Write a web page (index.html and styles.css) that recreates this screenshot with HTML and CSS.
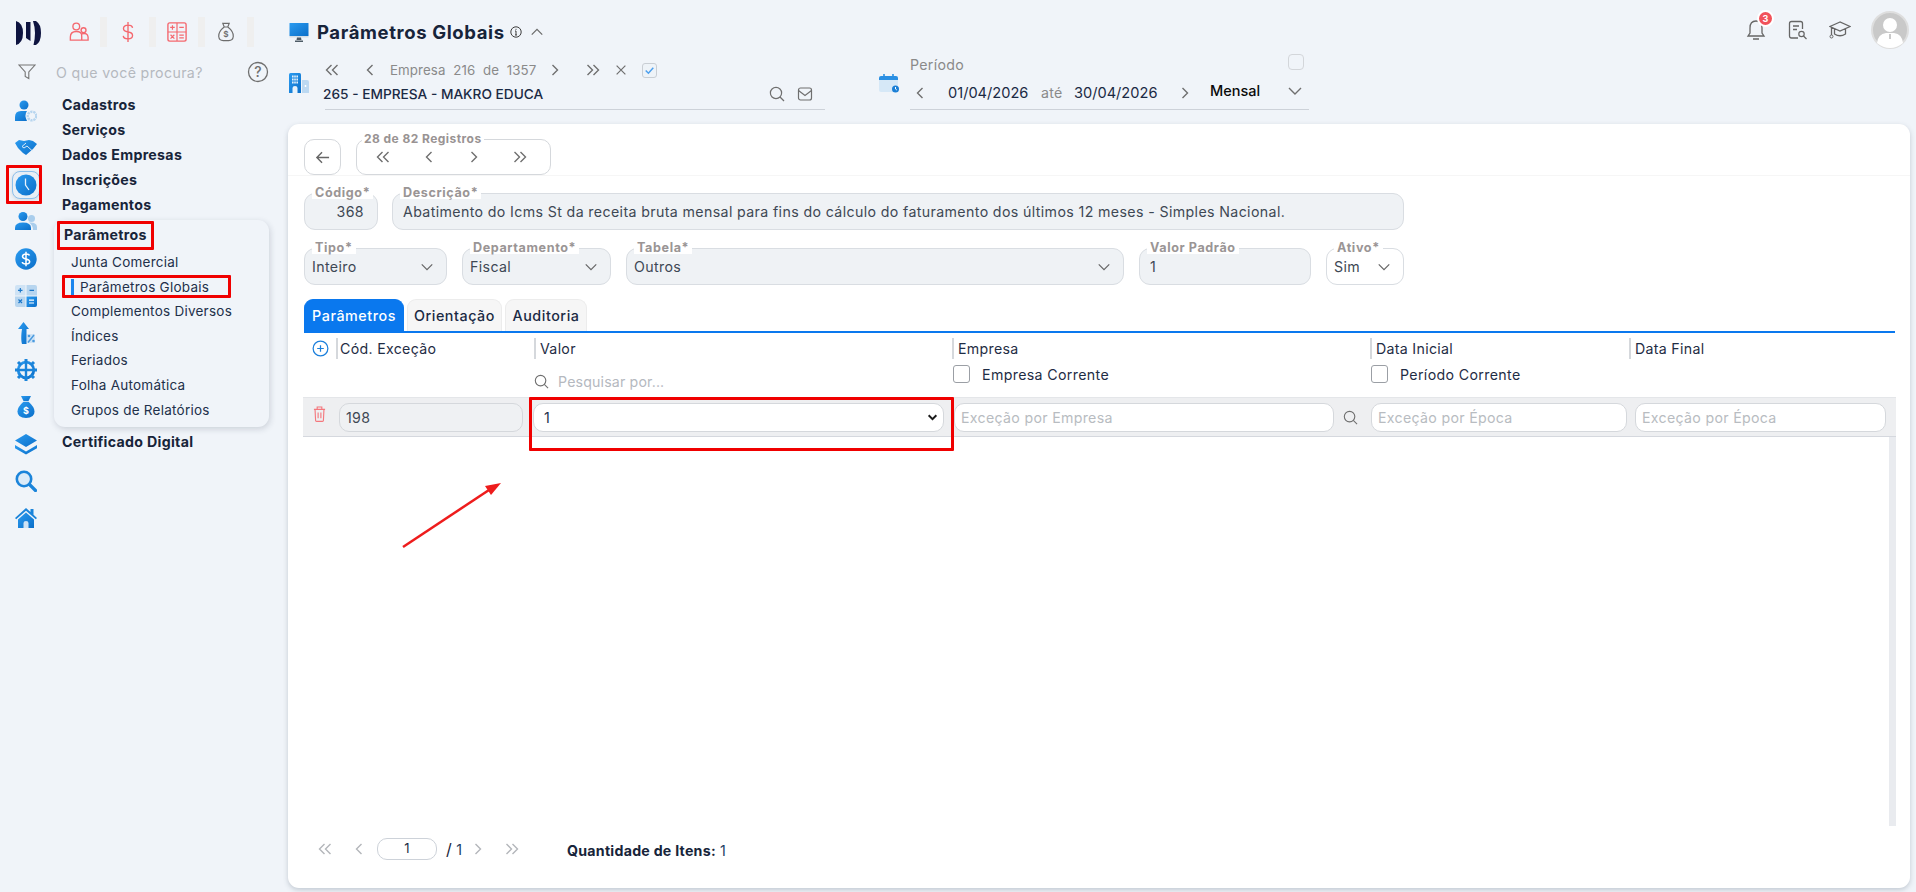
FILE: index.html
```html
<!DOCTYPE html>
<html lang="pt-BR">
<head>
<meta charset="utf-8">
<title>Parâmetros Globais</title>
<link rel="stylesheet" href="styles.css">
</head>
<body>
<svg class="defs" width="0" height="0" aria-hidden="true">
  <defs>
    <linearGradient id="bl" x1="0" y1="0" x2="1" y2="1"><stop offset="0" stop-color="#2b9bf0"/><stop offset="1" stop-color="#0b6fc9"/></linearGradient>
    <linearGradient id="lt" x1="0" y1="0" x2="1" y2="1"><stop offset="0" stop-color="#dcebf8"/><stop offset="1" stop-color="#a9cdec"/></linearGradient>
    <symbol id="dl" viewBox="0 0 16 16"><path d="M7.5 3 2.5 8l5 5M13.5 3l-5 5 5 5" fill="none" stroke="currentColor" stroke-width="1.4"/></symbol>
    <symbol id="l" viewBox="0 0 16 16"><path d="M10.5 3 5.5 8l5 5" fill="none" stroke="currentColor" stroke-width="1.4"/></symbol>
    <symbol id="r" viewBox="0 0 16 16"><path d="m5.5 3 5 5-5 5" fill="none" stroke="currentColor" stroke-width="1.4"/></symbol>
    <symbol id="dr" viewBox="0 0 16 16"><path d="m2.5 3 5 5-5 5M8.5 3l5 5-5 5" fill="none" stroke="currentColor" stroke-width="1.4"/></symbol>
    <symbol id="dn" viewBox="0 0 16 16"><path d="m2 5 6 6 6-6" fill="none" stroke="currentColor" stroke-width="1.4"/></symbol>
    <symbol id="se" viewBox="0 0 16 16"><circle cx="7" cy="7" r="5.6" fill="none" stroke="currentColor" stroke-width="1.2"/><path d="m11 11 4 4" stroke="currentColor" stroke-width="1.2"/></symbol>
  </defs>
</svg>

<div class="app">
  <aside class="side">
    <div class="side-top">
      <svg class="logo" viewBox="0 0 26 26"><path d="M1 1Q8 3 8 13T1 25ZM11 2h4.500v19L11 18ZM18 1h3q5 3 5 12t-5 12h-2.500q1.500-6 1.500-12T18 1Z" fill="#0e1440"/></svg>
      <div class="quick">
        <span class="quick-cell"><svg viewBox="0 0 22 22"><circle cx="8" cy="5" r="3.700" fill="none" stroke="#f4686f" stroke-width="1.500"/><circle cx="16" cy="9" r="2.700" fill="none" stroke="#f4686f" stroke-width="1.500"/><path d="M1.500 20v-3.500Q1.500 10.500 8 10.500t6 5.500v4ZM14 13q6.500-1.500 7 3.500V20h-7" fill="none" stroke="#f4686f" stroke-width="1.500"/></svg></span>
        <span class="quick-cell"><svg viewBox="0 0 22 22"><path d="M16 6.500Q15.500 3.500 11 3.500T6 7q0 3.500 5 4t5 3.800q0 3.700-5 3.700t-5.200-3.200M11 0v22" fill="none" stroke="#f4686f" stroke-width="1.500"/></svg></span>
        <span class="quick-cell"><svg viewBox="0 0 22 22"><rect x="1" y="1" width="20" height="20" rx="2" fill="none" stroke="#f4686f" stroke-width="1.500"/><path d="M11 1v20M1 11h20M3.500 6h5M6 3.500v5M13.500 6h5M3.900 14l4.200 4.200M8.100 14l-4.200 4.200M13.500 14.500h5M13.500 17.500h5" stroke="#f4686f" stroke-width="1.300" fill="none"/></svg></span>
        <span class="quick-cell"><svg viewBox="0 0 22 22"><path d="M7.500 1.500h7L13 5.500H9ZM9 5.500Q2.500 10.500 3 16q.5 4.500 5 4.500h6q4.500 0 5-4.500.5-5.500-6-10.500" fill="none" stroke="#6d6d6d" stroke-width="1.300"/><text x="11" y="16.500" class="money">$</text></svg></span>
      </div>
    </div>
    <div class="side-search">
      <svg class="filter" viewBox="0 0 18 18"><path d="M1 2h16l-6.200 7v6.500L7.200 13.500V9Z" fill="none" stroke="#757575" stroke-width="1.100"/></svg>
      <span class="placeholder-top">O que você procura?</span>
      <svg class="help" viewBox="0 0 22 22"><circle cx="11" cy="11" r="9.500" fill="none" stroke="#6f6f6f" stroke-width="1.300"/><text x="11" y="15.500" class="qmark">?</text></svg>
    </div>
    <div class="side-body">
      <nav class="rail">
        <svg viewBox="0 0 22 22"><circle cx="9" cy="5" r="4.500" fill="url(#bl)"/><path d="M0 21v-4q0-6 6-6h6q-3 4 0 10Z" fill="url(#bl)"/><circle cx="17" cy="16" r="4.300" fill="none" stroke="#b7d5ef" stroke-width="2.400" stroke-dasharray="2.200 .8"/></svg>
        <svg viewBox="0 0 22 22"><path d="M0 6 4 3l5 1 5-1 4 1 4 3-4 5-7 6-3-2-5-5Z" fill="url(#bl)"/><path d="M11 6 7 9.500l2 1.500 3-2 5.500 5" fill="none" stroke="#d9e9f7" stroke-width="1"/></svg>
        <span class="rail-active"><svg viewBox="0 0 22 22"><circle cx="11" cy="11" r="10.500" fill="url(#bl)"/><path d="M10.500 4.500V11l3.500 5" fill="none" stroke="#e8f3fc" stroke-width="1.300"/></svg></span>
        <svg viewBox="0 0 22 22"><circle cx="8" cy="5.500" r="4.500" fill="url(#bl)"/><path d="M0 19v-2q0-5.500 8-5.500t8 5.500v2Z" fill="url(#bl)"/><circle cx="16.500" cy="7.500" r="3.500" fill="#a9cdec"/><path d="M14 11.500q8-.5 8 4.500v3h-4q0-5-4-7.500Z" fill="#a9cdec"/></svg>
        <svg viewBox="0 0 22 22"><circle cx="11" cy="11" r="10.700" fill="url(#bl)"/><path d="M14.500 7.500Q14 6 11 6T7.500 8.200Q7.500 10.500 11 11t3.700 2.800Q14.500 16 11 16t-3.700-2M11 3.800v14.400" fill="none" stroke="#fff" stroke-width="1.500"/></svg>
        <svg viewBox="0 0 22 22"><path d="M2 0h8.500v10.500H0V2Q0 0 2 0Z" fill="#cfe3f5"/><path d="M11.500 0H20q2 0 2 2v8.500H11.500Z" fill="#b7d5ef"/><path d="M0 11.500h10.500V22H2q-2 0-2-2Z" fill="#b7d5ef"/><path d="M11.500 11.500H22V20q0 2-2 2h-8.500Z" fill="url(#bl)"/><path d="M3 5.300h4.500M5.300 3v4.500M14.500 5.300h4.500M3.500 14.500l3.500 3.500M7 14.500 3.500 18" stroke="#1976c9" stroke-width="1.200"/><path d="M14 15.200h5M14 18h5" stroke="#fff" stroke-width="1.200"/></svg>
        <svg viewBox="0 0 22 22"><path d="M8.500 0 14 7h-2.500v15H7c-1-3-1-9 0-15H3Z" fill="url(#bl)"/><path d="M12 12h8v9h-8Z" fill="#cfe3f5"/><path d="m19 13-6 7.500" stroke="#4a9adf" stroke-width="1.500"/><circle cx="14" cy="14" r="1.300" fill="#4a9adf"/><circle cx="18.500" cy="19" r="1.300" fill="#4a9adf"/></svg>
        <svg viewBox="0 0 22 22"><circle cx="11" cy="11" r="7.800" fill="none" stroke="url(#bl)" stroke-width="2.800"/><path d="M11 0v4M11 18v4M0 11h4M18 11h4M3 3l3 3M16 16l3 3M19 3l-3 3M6 16l-3 3" stroke="#1b84da" stroke-width="3"/><path d="M11 4v14M4 11h14" stroke="#1b84da" stroke-width="2.400"/></svg>
        <svg viewBox="0 0 22 22"><path d="M6 0h10l-2.500 5h-5Z" fill="url(#bl)"/><path d="M8.500 5.800h5Q19.500 11 19.500 15.500q0 6.500-8.500 6.500t-8.500-6.500Q2.500 11 8.500 5.800Z" fill="url(#bl)"/><text x="11" y="18" class="money-w">$</text></svg>
        <svg viewBox="0 0 22 22"><path d="M11 1 22 7.500 11 14 0 7.500Z" fill="url(#bl)"/><path d="m0 12 11 6.500L22 12v3.200L11 21.500 0 15.200Z" fill="url(#bl)"/></svg>
        <svg viewBox="0 0 22 22"><circle cx="9" cy="9" r="7.200" fill="#dcebf8" stroke="#1b84da" stroke-width="2.600"/><path d="m14.500 14.500 6 6" stroke="#1b84da" stroke-width="3.200" stroke-linecap="round"/></svg>
        <svg viewBox="0 0 22 22"><path d="M11 1 0 11l1.200 1.300L11 3.800l9.800 8.500L22 11l-3.500-3.200V2h-3v3Z" fill="#1b84da"/><path d="M11 5.500 3 12.500V21h16v-8.500Z" fill="url(#bl)"/><path d="M8.500 21v-5q0-2 2.500-2t2.500 2v5Z" fill="#cfe3f5"/></svg>
      </nav>
      <div class="menu">
        <a class="menu-main">Cadastros</a>
        <a class="menu-main">Serviços</a>
        <a class="menu-main">Dados Empresas</a>
        <a class="menu-main">Inscrições</a>
        <a class="menu-main">Pagamentos</a>
        <div class="submenu">
          <a class="submenu-title">Parâmetros</a>
          <a class="sub">Junta Comercial</a>
          <a class="sub sub-on">Parâmetros Globais</a>
          <a class="sub">Complementos Diversos</a>
          <a class="sub">Índices</a>
          <a class="sub">Feriados</a>
          <a class="sub">Folha Automática</a>
          <a class="sub">Grupos de Relatórios</a>
        </div>
        <a class="menu-main menu-cert">Certificado Digital</a>
      </div>
    </div>
  </aside>

  <main class="main">
    <header class="top">
      <div class="top-left">
        <div class="title-row">
          <svg class="ic20" viewBox="0 0 20 20"><path d="M1 1h18q.5 0 .5.500V14H.5V1.500Q.5 1 1 1Z" fill="url(#bl)"/><path d="M.5 14h19v1.500H.5Z" fill="#d5dee6"/><path d="M8 15.500h4l.5 2.500H7.500ZM6 18.500h8V20H6Z" fill="#4d5b66"/></svg>
          <h1>Parâmetros Globais</h1>
          <svg class="ic12" viewBox="0 0 12 12"><circle cx="6" cy="6" r="5.200" fill="none" stroke="#3d3d3d"/><path d="M6 5v4M5 5h1M5 9h2M6 2.800v1" stroke="#3d3d3d"/></svg>
          <svg class="ic14 grey" viewBox="0 0 16 16"><path d="m2 11 6-6 6 6" fill="none" stroke="currentColor" stroke-width="1.400"/></svg>
        </div>
        <div class="filters">
          <div class="company">
            <svg class="ic20 f-icon" viewBox="0 0 20 20"><path d="M1.500 0h9q1.500 0 1.500 1.500V20H0V1.500Q0 0 1.500 0Z" fill="url(#bl)"/><path d="M13 7h5q2 0 2 2v11h-7Z" fill="#bcd9f2"/><path d="M3 3.500h6M3 6.500h6M3 9.500h6" stroke="#e3f0fb" stroke-width="1.800" stroke-dasharray="1.600 .6"/><path d="M3.500 20v-5q0-2 2.500-2t2.500 2v5Z" fill="#e8f3fc"/><path d="M16.500 12v2" stroke="#fff" stroke-width="1.500"/></svg>
            <div class="company-body">
              <div class="company-nav">
                <svg class="nav-i n1"><use href="#dl"/></svg>
                <svg class="nav-i n2"><use href="#l"/></svg>
                <span class="company-count">Empresa&nbsp; 216 &nbsp;de&nbsp; 1357</span>
                <svg class="nav-i n3"><use href="#r"/></svg>
                <svg class="nav-i n4"><use href="#dr"/></svg>
                <svg class="nav-i n5" viewBox="0 0 16 16"><path d="m3 3 10 10M13 3 3 13" stroke="currentColor" stroke-width="1.400"/></svg>
                <span class="check-on"><svg viewBox="0 0 12 12"><path d="m2.500 6 2.500 2.500 4.500-5" fill="none" stroke="#4ea0ee" stroke-width="1.400"/></svg></span>
              </div>
              <div class="company-sel">
                <span class="company-name">265 - EMPRESA - MAKRO EDUCA</span>
                <svg class="nav-i sel-search"><use href="#se"/></svg>
                <svg class="nav-i sel-mail" viewBox="0 0 16 16"><rect x="1.500" y="2" width="13" height="12" rx="2" fill="none" stroke="currentColor" stroke-width="1.200"/><path d="m1.500 4.500 6.500 5 6.500-5" fill="none" stroke="currentColor" stroke-width="1.200"/></svg>
              </div>
            </div>
          </div>
          <div class="period">
            <svg class="ic20 f-icon" viewBox="0 0 20 20"><path d="M2 3h15q2 0 2 2v2H0V5q0-2 2-2Z" fill="#2a8fe3"/><path d="M0 7h19v10q0 2-2 2H2q-2 0-2-2Z" fill="#d6e8f7"/><path d="M5 1v3M14 1v3" stroke="#2a8fe3" stroke-width="1.600"/><circle cx="16.500" cy="16" r="3.500" fill="#1b7fd6"/><path d="M16.500 14v2l1.300 1" stroke="#fff" fill="none"/></svg>
            <div class="period-body">
              <div class="period-head"><span class="period-label">Período</span><span class="box-top"></span></div>
              <div class="period-sel">
                <svg class="nav-i p1"><use href="#l"/></svg>
                <span class="date d1">01/04/2026</span>
                <span class="ate">até</span>
                <span class="date d2">30/04/2026</span>
                <svg class="nav-i p2"><use href="#r"/></svg>
                <span class="mensal">Mensal</span>
                <svg class="nav-i p3"><use href="#dn"/></svg>
              </div>
            </div>
          </div>
        </div>
      </div>
      <div class="top-right">
        <span class="bell"><svg viewBox="0 0 20 24"><path d="M10 3q-6 0-6 7v5l-2 3h16l-2-3v-5q0-7-6-7ZM7 21h6" fill="none" stroke="#666" stroke-width="1.300"/></svg><b class="badge">3</b></span>
        <svg class="tr-doc" viewBox="0 0 20 20"><path d="M10 18H3.500Q1.500 18 1.500 16V3.500Q1.500 1.500 3.500 1.500h9q2 0 2 2V9M5 6h6M5 9.500h4" fill="none" stroke="#666" stroke-width="1.300"/><circle cx="13.500" cy="14" r="2.700" fill="none" stroke="#666" stroke-width="1.200"/><path d="m15.500 16 3 3" stroke="#666" stroke-width="1.200"/></svg>
        <svg class="tr-cap" viewBox="0 0 22 20"><path d="M11 2 1 6.500 11 11l10-4.500ZM5.500 9v5q5.500 3.500 11 0V9M2.500 7.500V15" fill="none" stroke="#666" stroke-width="1.300"/><circle cx="2.500" cy="16.500" r="1.500" fill="none" stroke="#666"/></svg>
        <span class="avatar"><svg viewBox="0 0 38 38"><circle cx="19" cy="19" r="18" fill="#c9c9c9" stroke="#dedede" stroke-width="2"/><circle cx="19" cy="14" r="7" fill="#fff"/><path d="M6 32q1-9 9-10h8q8 1 9 10-6 5-13 5T6 32Z" fill="#fff"/><path d="M18 23h2v5h-2Z" fill="#c9c9c9"/></svg></span>
      </div>
    </header>

    <section class="card">
      <div class="card-nav">
        <button class="back"><svg viewBox="0 0 16 16"><path d="M15 8H2M7.500 2.500 2 8l5.500 5.500" fill="none" stroke="#666" stroke-width="1.500"/></svg></button>
        <div class="rec">
          <span class="rec-label">28 de 82 Registros</span>
          <svg class="nav-i"><use href="#dl"/></svg>
          <svg class="nav-i"><use href="#l"/></svg>
          <svg class="nav-i"><use href="#r"/></svg>
          <svg class="nav-i"><use href="#dr"/></svg>
        </div>
      </div>

      <div class="form-row row-a">
        <div class="field f-code"><label>Código*</label><span class="val right">368</span></div>
        <div class="field f-desc"><label>Descrição*</label><span class="val">Abatimento do Icms St da receita bruta mensal para fins do cálculo do faturamento dos últimos 12 meses - Simples Nacional.</span></div>
      </div>
      <div class="form-row row-b">
        <div class="field f-tipo"><label>Tipo*</label><span class="val">Inteiro</span><svg class="chev"><use href="#dn"/></svg></div>
        <div class="field f-dep"><label>Departamento*</label><span class="val">Fiscal</span><svg class="chev"><use href="#dn"/></svg></div>
        <div class="field f-tab"><label>Tabela*</label><span class="val">Outros</span><svg class="chev"><use href="#dn"/></svg></div>
        <div class="field f-pad"><label>Valor Padrão</label><span class="val">1</span></div>
        <div class="field f-ati white"><label>Ativo*</label><span class="val">Sim</span><svg class="chev"><use href="#dn"/></svg></div>
      </div>

      <div class="tabs">
        <span class="tab tab-on t1">Parâmetros</span>
        <span class="tab t2">Orientação</span>
        <span class="tab t3">Auditoria</span>
      </div>

      <div class="grid-head">
        <span class="cell-add"><svg viewBox="0 0 18 18"><circle cx="9" cy="9" r="7.800" fill="none" stroke="#1b7fdc" stroke-width="1.300"/><path d="M9 5.500v7M5.500 9h7" stroke="#1b7fdc" stroke-width="1.300"/></svg></span>
        <span class="col c1">Cód. Exceção</span>
        <span class="col">Valor</span>
        <span class="col">Empresa</span>
        <span class="col">Data Inicial</span>
        <span class="col">Data Final</span>
      </div>
      <div class="grid-filter">
        <span></span>
        <span></span>
        <span class="g-search"><svg><use href="#se"/></svg><i>Pesquisar por...</i></span>
        <span class="g-check"><b class="box"></b>Empresa Corrente</span>
        <span class="g-check"><b class="box"></b>Período Corrente</span>
        <span></span>
      </div>
      <div class="grid-row">
        <span class="trash"><svg viewBox="0 0 14 18"><path d="M1 4h12M4.500 4V1.500h5V4M2.200 4l.6 12q0 1 1 1h6.400q1 0 1-1l.6-12M5.500 7.500v6M8.500 7.500v6" fill="none" stroke="#f4777d" stroke-width="1.200"/></svg></span>
        <span class="inp inp-code">198</span>
        <span class="inp inp-sel">1<svg viewBox="0 0 10 10"><path d="m1.500 3 3.500 3.500L8.500 3" fill="none" stroke="#1a1a1a" stroke-width="1.800"/></svg></span>
        <span class="inp-wrap"><span class="inp ph inp-emp">Exceção por Empresa</span><svg class="inp-search"><use href="#se"/></svg></span>
        <span class="inp ph inp-d1">Exceção por Época</span>
        <span class="inp ph inp-d2">Exceção por Época</span>
      </div>
      <div class="grid-empty"><span class="scroll"></span></div>

      <div class="pager">
        <svg class="nav-i pg-a"><use href="#dl"/></svg>
        <svg class="nav-i pg-b"><use href="#l"/></svg>
        <span class="pg-input">1</span>
        <span class="pg-of"><b>/</b> 1</span>
        <svg class="nav-i pg-c"><use href="#r"/></svg>
        <svg class="nav-i pg-d"><use href="#dr"/></svg>
        <span class="qty"><b>Quantidade de Itens:</b> 1</span>
      </div>
    </section>
  </main>
</div>

<div class="mark m-clock"></div>
<div class="mark m-par"></div>
<div class="mark m-glob"></div>
<div class="mark m-sel"></div>
<svg class="arrow" viewBox="0 0 110 75"><path d="M3 69 92 10" stroke="#ee1c1c" stroke-width="2.500"/><path d="m101 5-16 3 6 9Z" fill="#ee1c1c"/></svg>
</body>
</html>
```

FILE: styles.css
```css
* { box-sizing: border-box; }
html, body { margin: 0; padding: 0; }
body {
  width: 1916px; height: 892px; overflow: hidden; position: relative;
  background: #f0f4f9; color: #17243a;
  font-family: Inter, "Noto Sans", sans-serif; font-size: 14.200px; letter-spacing: .3px;
}
svg { display: block; flex: none; }
.defs { position: absolute; }
.app { display: flex; height: 892px; }

/* sidebar */
.side { width: 288px; flex: none; display: flex; flex-direction: column; }
.side-top { display: flex; height: 47px; padding: 17px 0 0 15px; }
.logo { width: 26px; height: 26px; margin-top: 3px; }
.quick { display: flex; margin-left: 17px; }
.quick-cell { width: 49px; height: 30px; padding: 5px 0 0 11px; border-right: 7px solid #efefef; margin-left: 0; }
.quick-cell svg { width: 20px; height: 20px; }
.money { font: 600 9px Inter, sans-serif; fill: #6d6d6d; text-anchor: middle; }
.money-w { font: 700 9px Inter, sans-serif; fill: #fff; text-anchor: middle; }
.side-search { display: flex; align-items: center; height: 36px; margin-top: 7px; padding-left: 18px; position: relative; }
.filter { width: 18px; height: 18px; }
.placeholder-top { margin-left: 20px; color: #b5b9bf; width: 191px; white-space: nowrap; letter-spacing: .35px; }
.help { width: 22px; height: 22px; }
.qmark { font: 500 14px Inter, sans-serif; fill: #6f6f6f; text-anchor: middle; }
.side-body { display: flex; }
.rail { width: 54px; flex: none; display: flex; flex-direction: column; align-items: center; padding: 10px 2px 0 0; }
.rail > svg { width: 22px; height: 22px; margin-bottom: 15px; }
.rail-active { display: flex; align-items: center; justify-content: center; width: 28px; height: 28px; margin: -3px 0 12px; border: 1px solid #8cc0ec; border-radius: 8px; background: #e9eff6; box-shadow: 0 1px 4px rgba(0,0,0,.12); }
.rail-active svg { width: 22px; height: 22px; }
.menu { flex: 1; display: flex; flex-direction: column; padding-top: 2px; }
.menu a { display: block; }
.menu-main { padding-left: 8px; height: 25px; line-height: 25px; font-weight: 700; font-size: 14.200px; color: #17243a; white-space: nowrap; }
.submenu { width: 215px; height: 207px; margin: 3px 0 0 0; padding: 3px 0 0 10px; border-radius: 11px; background: #f0f4f9; box-shadow: 1px 2px 6px rgba(40,50,70,.18); }
.submenu-title { font-weight: 700; font-size: 14.200px; height: 27px; line-height: 24px; }
.sub { font-size: 13.500px; letter-spacing: .25px; height: 24.600px; line-height: 24.600px; padding-left: 7px; color: #22304a; white-space: nowrap; }
.sub-on { position: relative; padding-left: 16px; }
.sub-on::before { content: ""; position: absolute; left: 7px; top: 4px; width: 3px; height: 17px; background: #1b86ee; }
.menu-cert { margin-top: 2px; }

/* main */
.main { flex: 1; display: flex; flex-direction: column; min-width: 0; padding-right: 6px; }
.top { height: 124px; display: flex; justify-content: space-between; flex: none; }
.top-left { display: flex; flex-direction: column; }
.title-row { display: flex; align-items: center; height: 24px; margin-top: 20px; padding-left: 1px; }
.ic20 { width: 20px; height: 20px; }
.ic12 { width: 12px; height: 12px; margin-left: 5px; }
.ic14 { width: 14px; height: 14px; margin-left: 8px; }
.grey { color: #6a6a6a; }
h1 { margin: 0 0 0 8px; font-size: 18.500px; font-weight: 700; color: #17243a; letter-spacing: .62px; white-space: nowrap; }
.filters { display: flex; margin-top: 14px; }
.company { display: flex; width: 591px; padding-left: 1px; flex: none; }
.f-icon { margin-top: 15px; }
.nav-i { width: 16px; height: 16px; color: #6f6f6f; }
.company-body { width: 514px; margin-left: 13px; }
.company-nav { display: flex; align-items: center; height: 24px; position: relative; }
.n1 { margin-left: 2px; }
.n2 { margin-left: 22px; }
.company-count { margin-left: 12px; color: #8a8a8a; width: 145px; white-space: nowrap; font-size: 13.300px; letter-spacing: .1px; }
.n3 { margin-left: 12px; }
.n4 { margin-left: 22px; }
.n5 { margin-left: 13px; width: 14px !important; height: 14px !important; }
.check-on { width: 15px; height: 15px; margin-left: 14px; border: 1px solid #c9ced4; border-radius: 3px; background: #eef3f8; }
.check-on svg { width: 13px; height: 13px; }
.company-sel { display: flex; align-items: center; height: 28px; margin-left: 3px; width: 500px; border-bottom: 1px solid #cdd2d9; padding-bottom: 4px; }
.company-name { margin-left: -2px; width: 446px; font-size: 13.700px; letter-spacing: 0; font-weight: 500; color: #1b2a44; white-space: nowrap; }
.sel-mail { margin-left: 12px; }
.period { display: flex; }
.period-body { margin-left: 11px; width: 399px; margin-top: -8px; }
.period-head { display: flex; align-items: flex-end; height: 24px; justify-content: space-between; padding: 0 5px 0 0; }
.period-label { color: #8a8a8a; line-height: 19px; }
.box-top { width: 16px; height: 16px; border: 1px solid #d3d6da; border-radius: 4px; margin-bottom: 4px; }
.period-sel { display: flex; align-items: center; height: 26px; border-bottom: 1px solid #cdd2d9; padding-bottom: 8px; margin-top: 10px; }
.p1 { margin-left: 2px; }
.date { font-size: 14.600px; letter-spacing: 0; color: #1b2a44; white-space: nowrap; }
.d1 { margin-left: 20px; width: 93px; }
.d2 { width: 83px; }
.ate { width: 33px; color: #8a8a8a; }
.p2 { margin-left: 20px; }
.mensal { margin-left: 17px; width: 77px; font-size: 14.500px; letter-spacing: 0; font-weight: 500; color: #0a0a0a; margin-bottom: 4px; }
.p3 { margin-bottom: 3px; }
.top-right { display: flex; align-items: flex-start; padding: 11px 0 0 0; margin-right: -6px; }
.bell { position: relative; width: 20px; height: 24px; margin-top: 7px; }
.bell > svg { width: 20px; height: 24px; }
.badge { position: absolute; left: 11px; top: -8px; width: 17px; height: 17px; border-radius: 50%; background: #f1525a; border: 2px solid #fff; color: #fff; font-size: 9px; letter-spacing: 0; font-weight: 700; line-height: 13px; text-align: center; }
.tr-doc { width: 20px; height: 20px; margin: 9px 0 0 22px; }
.tr-cap { width: 22px; height: 20px; margin: 9px 0 0 21px; }
.avatar { margin: 0 7px 0 20px; width: 38px; height: 38px; }
.avatar svg { width: 38px; height: 38px; }

/* card */
.card { height: 764px; background: #fff; border-radius: 11px; box-shadow: 0 2px 5px rgba(60,75,95,.25); padding: 15px 0 0 16px; display: flex; flex-direction: column; }
.card-nav { display: flex; height: 37px; margin-left: -16px; padding-left: 16px; border-bottom: 1px solid #f6f6f6; flex: none; }
.back { width: 37px; height: 36px; padding: 0; border: 1px solid #d5d8dc; border-radius: 10px; background: #fff; display: flex; align-items: center; justify-content: center; }
.back svg { width: 15px; height: 15px; }
.rec { position: relative; margin-left: 15px; width: 195px; height: 36px; border: 1px solid #d5d8dc; border-radius: 10px; display: flex; justify-content: space-between; align-items: center; padding: 0 22px 0 18px; }
.rec-label { position: absolute; left: 5px; top: -8px; padding: 0 2px; background: #fff; font-size: 12px; letter-spacing: .45px; font-weight: 700; color: #999393; line-height: 13px; white-space: nowrap; }
.form-row { display: flex; flex: none; }
.row-a { margin-top: 17px; gap: 14px; }
.row-b { margin-top: 18px; gap: 15px; }
.field { position: relative; height: 37px; border: 1px solid #d9dde2; border-radius: 11px; background: #eff2f5; padding: 0 7px; display: flex; align-items: center; }
.field label { position: absolute; left: 7px; top: -7px; padding: 0 3px; background: #fff; font-size: 12.600px; letter-spacing: .6px; font-weight: 700; line-height: 12px; color: #9a9595; white-space: nowrap; }
.val { color: #3e4854; white-space: nowrap; flex: 1; letter-spacing: .37px; }
.right { text-align: right; padding-right: 6px; }
.white { background: #fff; }
.f-code { width: 74px; }
.f-desc { width: 1012px; padding-left: 10px; }
.f-tipo { width: 143px; }
.f-dep { width: 149px; }
.f-tab { width: 498px; }
.f-pad { width: 172px; padding-left: 10px; }
.f-ati { width: 78px; }
.chev { width: 14px; height: 14px; color: #666; margin: 1px 5px 0 0; }
.tabs { display: flex; gap: 3px; margin-top: 14px; height: 34px; border-bottom: 2px solid #0a78ee; margin-right: 15px; flex: none; }
.tab { height: 32px; border: 1px solid #ececec; border-bottom: 0; border-radius: 9px 9px 0 0; background: #f6f6f6; display: flex; align-items: center; justify-content: center; font-size: 14.300px; letter-spacing: .55px; font-weight: 500; color: #1b2a44; }
.tab-on { background: #0a78ee; border-color: #0a78ee; color: #fff; }
.t1 { width: 100px; }
.t2 { width: 95px; }
.t3 { width: 82px; }
.grid-head, .grid-filter { display: grid; grid-template-columns: 32px 198px 418px 418px 259px 266px; flex: none; }
.grid-head { margin-top: 5px; height: 21px; }
.cell-add { display: flex; align-items: center; padding-left: 8px; }
.cell-add svg { width: 17px; height: 17px; }
.col { border-left: 2px solid #d5d8dc; padding-left: 4px; line-height: 21px; color: #1f2d45; white-space: nowrap; }
.c1 { padding-left: 2px; }
.grid-filter { height: 38px; }
.g-search { display: flex; align-items: center; gap: 9px; padding: 6px 0 0 0; color: #b5b9bf; letter-spacing: .15px; }
.g-search svg { width: 15px; height: 15px; color: #6f6f6f; }
.g-search i { font-style: normal; }
.g-check { display: flex; align-items: center; padding: 0 0 8px 1px; color: #1f2d45; white-space: nowrap; letter-spacing: .35px; }
.box { width: 17px; height: 18px; border: 1px solid #9b9fa5; border-radius: 3px; margin-right: 12px; background: #fff; flex: none; }
.grid-row { display: grid; flex: none; margin-left: -1px; width: 1593px; height: 40px; background: #eeeff1; border-top: 1px solid #e4e6e9; border-bottom: 1px solid #d5d8de; align-items: start; padding-top: 5px; grid-template-columns: 36px 194px 421px 417px 264px 261px; }
.trash { display: flex; padding: 2px 0 0 10px; }
.trash svg { width: 13px; height: 18px; }
.inp { display: flex; align-items: center; height: 29px; border: 1px solid #d5d8dc; border-radius: 10px; background: #fff; padding: 0 6px; color: #3e4854; white-space: nowrap; }
.ph { color: #b8bcc1; }
.inp-code { width: 184px; background: #eff1f3; }
.inp-sel { width: 411px; justify-content: space-between; padding: 0 5px 0 10px; color: #22304a; }
.inp-sel svg { width: 11px; height: 11px; }
.inp-wrap { display: flex; align-items: center; }
.inp-emp { width: 380px; }
.inp-search { margin-left: 9px; width: 15px; height: 15px; color: #6f6f6f; }
.inp-d1 { width: 256px; }
.inp-d2 { width: 251px; }
.grid-empty { height: 389px; position: relative; flex: none; margin-right: 14px; display: flex; justify-content: flex-end; }
.scroll { width: 7px; height: 389px; background: #e9ebef; }
.pager { display: flex; align-items: center; height: 24px; margin-top: 11px; padding-left: 13px; flex: none; color: #a9adb2; position: relative; }
.pager .nav-i { color: #b3b6ba; }
.pg-b { margin-left: 18px; }
.pg-input { margin-left: 10px; width: 60px; height: 22px; border: 1px solid #cdd2d9; border-radius: 10px; text-align: center; line-height: 18px; font-size: 13px; color: #1b2a44; }
.pg-of { margin-left: 9px; color: #22405f; width: 18px; white-space: nowrap; }
.pg-of b { font-weight: 400; font-size: 16px; color: #17243a; }
.pg-c { margin-left: 6px; }
.pg-d { margin-left: 18px; }
.qty { margin-left: 47px; letter-spacing: .25px; color: #22405f; padding-top: 3px; white-space: nowrap; }
.qty b { font-weight: 700; color: #17243a; }

/* annotations */
.mark { position: absolute; border: 3px solid #f00000; border-radius: 1px; pointer-events: none; }
.m-clock { left: 6px; top: 165px; width: 36px; height: 39px; }
.m-par { left: 57px; top: 221px; width: 97px; height: 29px; }
.m-glob { left: 62px; top: 275px; width: 169px; height: 23px; }
.m-sel { left: 529px; top: 397px; width: 425px; height: 54px; }
.arrow { position: absolute; left: 400px; top: 478px; width: 110px; height: 75px; }
```
